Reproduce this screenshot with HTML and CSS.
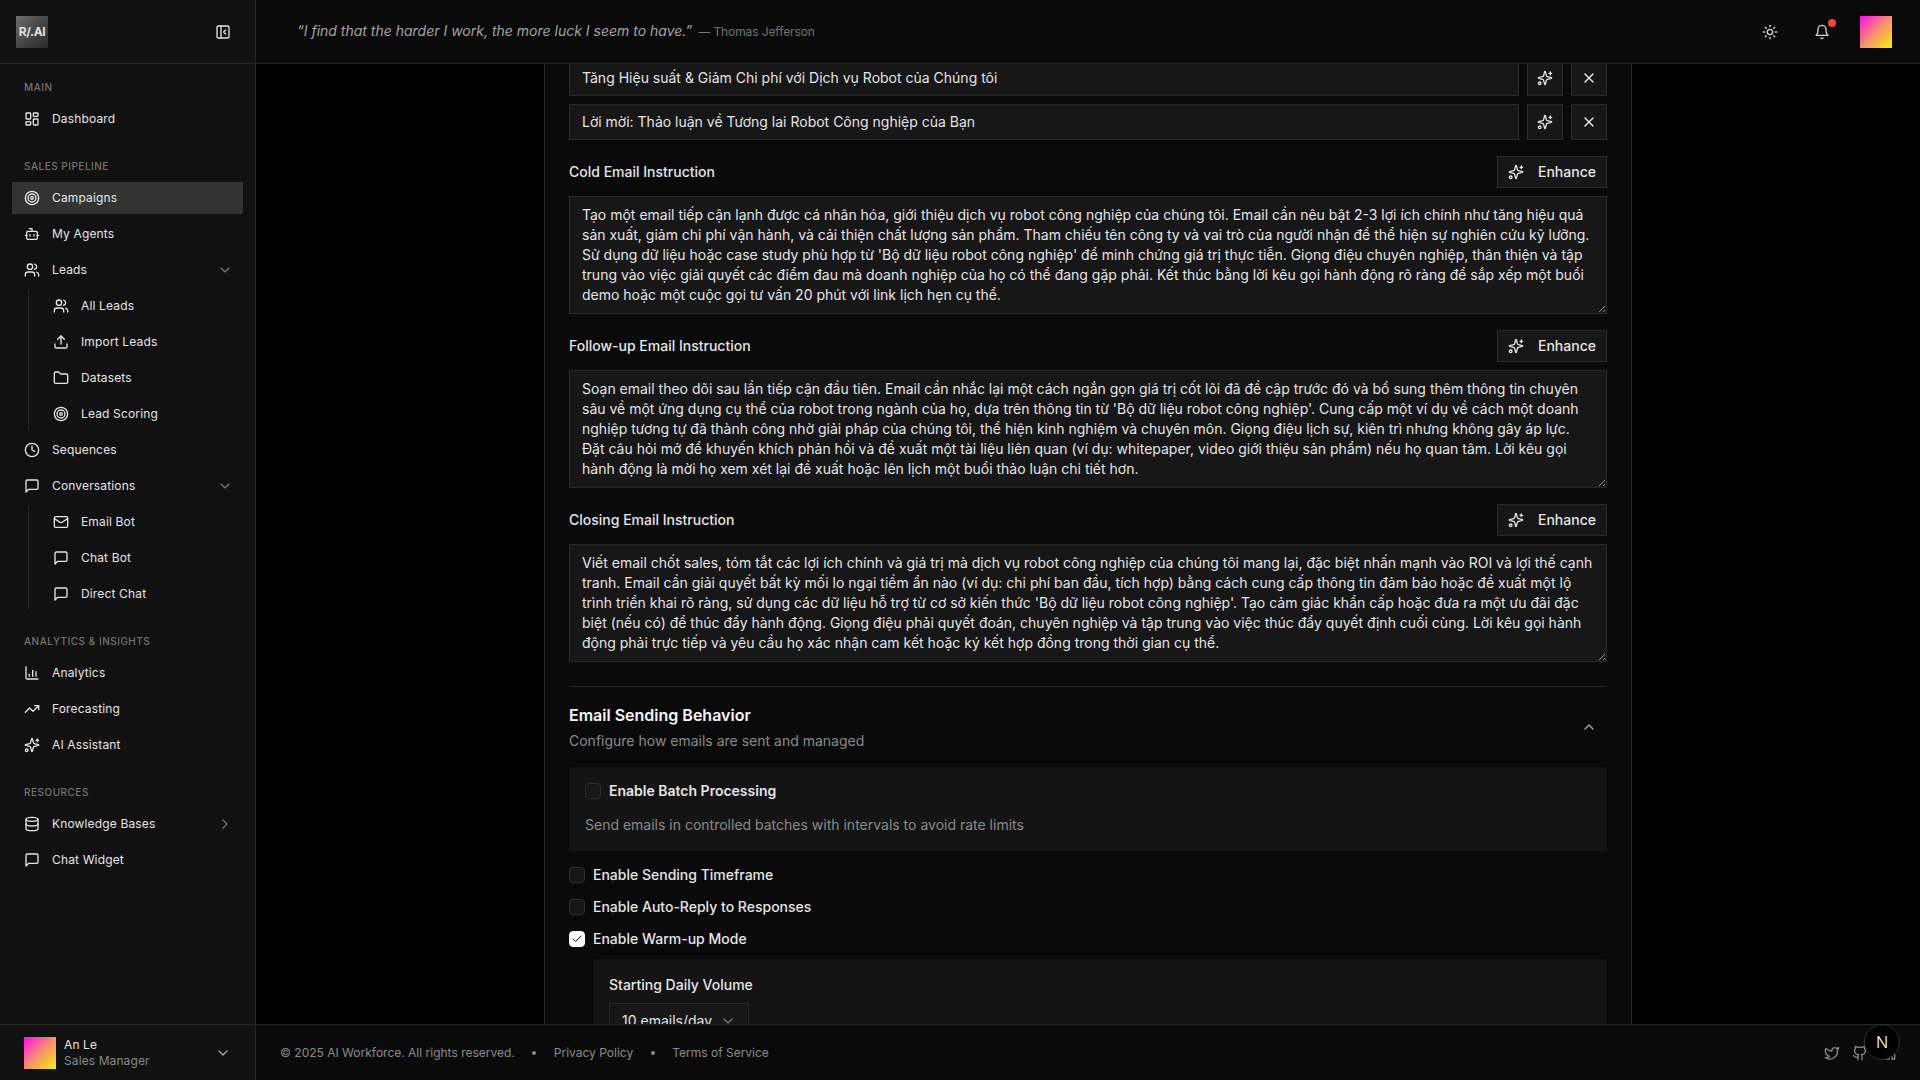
FILE: index.html
```html
<!DOCTYPE html>
<html lang="vi">
<head>
<meta charset="utf-8">
<title>AI Workforce – Campaigns</title>
<link rel="stylesheet" href="styles.css">
</head>
<body>
<svg class="sprite" aria-hidden="true">
  <symbol id="i-dash" viewBox="0 0 24 24"><rect width="7" height="9" x="3" y="3" rx="1"/><rect width="7" height="5" x="14" y="3" rx="1"/><rect width="7" height="9" x="14" y="12" rx="1"/><rect width="7" height="5" x="3" y="16" rx="1"/></symbol>
  <symbol id="i-target" viewBox="0 0 24 24"><circle cx="12" cy="12" r="10"/><circle cx="12" cy="12" r="6"/><circle cx="12" cy="12" r="2"/></symbol>
  <symbol id="i-bot" viewBox="0 0 24 24"><path d="M12 8V4H8"/><rect width="16" height="12" x="4" y="8" rx="2"/><path d="M2 14h2"/><path d="M20 14h2"/><path d="M15 13v2"/><path d="M9 13v2"/></symbol>
  <symbol id="i-users" viewBox="0 0 24 24"><path d="M16 21v-2a4 4 0 0 0-4-4H6a4 4 0 0 0-4 4v2"/><circle cx="9" cy="7" r="4"/><path d="M22 21v-2a4 4 0 0 0-3-3.87"/><path d="M16 3.13a4 4 0 0 1 0 7.75"/></symbol>
  <symbol id="i-upload" viewBox="0 0 24 24"><path d="M21 15v4a2 2 0 0 1-2 2H5a2 2 0 0 1-2-2v-4"/><path d="M17 8l-5-5-5 5"/><path d="M12 3v12"/></symbol>
  <symbol id="i-folder" viewBox="0 0 24 24"><path d="M20 20a2 2 0 0 0 2-2V8a2 2 0 0 0-2-2h-7.9a2 2 0 0 1-1.69-.9L9.6 3.9A2 2 0 0 0 7.93 3H4a2 2 0 0 0-2 2v13a2 2 0 0 0 2 2Z"/></symbol>
  <symbol id="i-clock" viewBox="0 0 24 24"><circle cx="12" cy="12" r="10"/><path d="M12 6v6l4 2"/></symbol>
  <symbol id="i-chat" viewBox="0 0 24 24"><path d="M21 15a2 2 0 0 1-2 2H7l-4 4V5a2 2 0 0 1 2-2h14a2 2 0 0 1 2 2z"/></symbol>
  <symbol id="i-mail" viewBox="0 0 24 24"><rect width="20" height="16" x="2" y="4" rx="2"/><path d="m22 7-8.97 5.7a1.94 1.94 0 0 1-2.06 0L2 7"/></symbol>
  <symbol id="i-chart" viewBox="0 0 24 24"><path d="M3 3v16a2 2 0 0 0 2 2h16"/><path d="M18 17v-7"/><path d="M13 17V8"/><path d="M8 17v-3"/></symbol>
  <symbol id="i-trend" viewBox="0 0 24 24"><path d="M22 7l-8.5 8.5-5-5L2 17"/><path d="M16 7h6v6"/></symbol>
  <symbol id="i-spark" viewBox="0 0 24 24"><path d="M9.937 15.5A2 2 0 0 0 8.5 14.063l-6.135-1.582a.5.5 0 0 1 0-.962L8.5 9.936A2 2 0 0 0 9.937 8.5l1.582-6.135a.5.5 0 0 1 .963 0L14.063 8.5A2 2 0 0 0 15.5 9.937l6.135 1.581a.5.5 0 0 1 0 .964L15.5 14.063a2 2 0 0 0-1.437 1.437l-1.582 6.135a.5.5 0 0 1-.963 0z"/><path d="M20 3v4"/><path d="M22 5h-4"/><circle cx="4" cy="20" r="2"/></symbol>
  <symbol id="i-db" viewBox="0 0 24 24"><ellipse cx="12" cy="5" rx="9" ry="3"/><path d="M3 5V19A9 3 0 0 0 21 19V5"/><path d="M3 12A9 3 0 0 0 21 12"/></symbol>
  <symbol id="i-down" viewBox="0 0 24 24"><path d="m6 9 6 6 6-6"/></symbol>
  <symbol id="i-up" viewBox="0 0 24 24"><path d="m18 15-6-6-6 6"/></symbol>
  <symbol id="i-right" viewBox="0 0 24 24"><path d="m9 18 6-6-6-6"/></symbol>
  <symbol id="i-panel" viewBox="0 0 24 24"><rect width="18" height="18" x="3" y="3" rx="2"/><path d="M9 3v18"/><path d="m16 15-3-3 3-3"/></symbol>
  <symbol id="i-sun" viewBox="0 0 24 24"><circle cx="12" cy="12" r="4"/><path d="M12 2v2"/><path d="M12 20v2"/><path d="m4.93 4.93 1.41 1.41"/><path d="m17.66 17.66 1.41 1.41"/><path d="M2 12h2"/><path d="M20 12h2"/><path d="m6.34 17.66-1.41 1.41"/><path d="m19.07 4.93-1.41 1.41"/></symbol>
  <symbol id="i-bell" viewBox="0 0 24 24"><path d="M6 8a6 6 0 0 1 12 0c0 7 3 9 3 9H3s3-2 3-9"/><path d="M10.3 21a1.94 1.94 0 0 0 3.4 0"/></symbol>
  <symbol id="i-x" viewBox="0 0 24 24"><path d="M18 6 6 18"/><path d="m6 6 12 12"/></symbol>
  <symbol id="i-check" viewBox="0 0 24 24"><path d="M20 6 9 17l-5-5"/></symbol>
  <symbol id="i-twitter" viewBox="0 0 24 24"><path d="M22 4s-.7 2.1-2 3.4c1.6 10-9.4 17.3-18 11.6 2.2.1 4.4-.6 6-2C3 15.5.5 9.6 3 5c2.2 2.6 5.6 4.1 9 4-.9-4.2 4-6.6 7-3.8 1.1 0 3-1.2 3-1.2z"/></symbol>
  <symbol id="i-github" viewBox="0 0 24 24"><path d="M15 22v-4a4.8 4.8 0 0 0-1-3.5c3 0 6-2 6-5.5.08-1.25-.27-2.48-1-3.5.28-1.15.28-2.35 0-3.5 0 0-1 0-3 1.5-2.64-.5-5.36-.5-8 0C6 2 5 2 5 2c-.3 1.15-.3 2.35 0 3.5A5.403 5.403 0 0 0 4 9c0 3.5 3 5.5 6 5.5-.39.49-.68 1.05-.85 1.65-.17.6-.22 1.23-.15 1.85v4"/><path d="M9 18c-4.51 2-5-2-7-2"/></symbol>
  <symbol id="i-linkedin" viewBox="0 0 24 24"><path d="M16 8a6 6 0 0 1 6 6v7h-4v-7a2 2 0 0 0-2-2 2 2 0 0 0-2 2v7h-4v-7a6 6 0 0 1 6-6z"/><rect width="4" height="12" x="2" y="9"/><circle cx="4" cy="4" r="2"/></symbol>
</svg>

<div class="app">
  <aside class="sidebar">
    <div class="brand">
      <div class="logo"><span>R/.AI</span></div>
      <svg class="icon brand-toggle"><use href="#i-panel"/></svg>
    </div>
    <nav class="nav">
      <section class="nav-section">
        <h2 class="nav-title">MAIN</h2>
        <a class="nav-item"><svg class="icon"><use href="#i-dash"/></svg>Dashboard</a>
      </section>
      <section class="nav-section">
        <h2 class="nav-title">SALES PIPELINE</h2>
        <a class="nav-item active"><svg class="icon"><use href="#i-target"/></svg>Campaigns</a>
        <a class="nav-item"><svg class="icon"><use href="#i-bot"/></svg>My Agents</a>
        <a class="nav-item"><svg class="icon"><use href="#i-users"/></svg>Leads<svg class="icon caret"><use href="#i-down"/></svg></a>
        <div class="nav-sub">
          <a class="nav-item"><svg class="icon"><use href="#i-users"/></svg>All Leads</a>
          <a class="nav-item"><svg class="icon"><use href="#i-upload"/></svg>Import Leads</a>
          <a class="nav-item"><svg class="icon"><use href="#i-folder"/></svg>Datasets</a>
          <a class="nav-item"><svg class="icon"><use href="#i-target"/></svg>Lead Scoring</a>
        </div>
        <a class="nav-item"><svg class="icon"><use href="#i-clock"/></svg>Sequences</a>
        <a class="nav-item"><svg class="icon"><use href="#i-chat"/></svg>Conversations<svg class="icon caret"><use href="#i-down"/></svg></a>
        <div class="nav-sub">
          <a class="nav-item"><svg class="icon"><use href="#i-mail"/></svg>Email Bot</a>
          <a class="nav-item"><svg class="icon"><use href="#i-chat"/></svg>Chat Bot</a>
          <a class="nav-item"><svg class="icon"><use href="#i-chat"/></svg>Direct Chat</a>
        </div>
      </section>
      <section class="nav-section">
        <h2 class="nav-title">ANALYTICS &amp; INSIGHTS</h2>
        <a class="nav-item"><svg class="icon"><use href="#i-chart"/></svg>Analytics</a>
        <a class="nav-item"><svg class="icon"><use href="#i-trend"/></svg>Forecasting</a>
        <a class="nav-item"><svg class="icon"><use href="#i-spark"/></svg>AI Assistant</a>
      </section>
      <section class="nav-section">
        <h2 class="nav-title">RESOURCES</h2>
        <a class="nav-item"><svg class="icon"><use href="#i-db"/></svg>Knowledge Bases<svg class="icon caret"><use href="#i-right"/></svg></a>
        <a class="nav-item"><svg class="icon"><use href="#i-chat"/></svg>Chat Widget</a>
      </section>
    </nav>
    <div class="user">
      <div class="avatar"></div>
      <div class="user-info">
        <div class="user-name">An Le</div>
        <div class="user-role">Sales Manager</div>
      </div>
      <svg class="icon user-caret"><use href="#i-down"/></svg>
    </div>
  </aside>

  <div class="workspace">
    <header class="topbar">
      <p class="quote"><em>“I find that the harder I work, the more luck I seem to have.”</em> <span class="quote-by">— Thomas Jefferson</span></p>
      <div class="top-actions">
        <button class="top-btn"><svg class="icon"><use href="#i-sun"/></svg></button>
        <button class="top-btn"><svg class="icon"><use href="#i-bell"/></svg><span class="badge"></span></button>
        <div class="avatar top-avatar"></div>
      </div>
    </header>

    <main class="main">
      <div class="column">
        <div class="scroller">
          <div class="subjects">
            <div class="subject-row">
              <div class="input">Tăng Hiệu suất &amp; Giảm Chi phí với Dịch vụ Robot của Chúng tôi</div>
              <button class="square-btn"><svg class="icon"><use href="#i-spark"/></svg></button>
              <button class="square-btn"><svg class="icon"><use href="#i-x"/></svg></button>
            </div>
            <div class="subject-row">
              <div class="input">Lời mời: Thảo luận về Tương lai Robot Công nghiệp của Bạn</div>
              <button class="square-btn"><svg class="icon"><use href="#i-spark"/></svg></button>
              <button class="square-btn"><svg class="icon"><use href="#i-x"/></svg></button>
            </div>
          </div>

          <div class="field">
            <div class="field-head">
              <label class="field-label">Cold Email Instruction</label>
              <button class="enhance"><svg class="icon"><use href="#i-spark"/></svg>Enhance</button>
            </div>
            <textarea class="area" readonly>Tạo một email tiếp cận lạnh được cá nhân hóa, giới thiệu dịch vụ robot công nghiệp của chúng tôi. Email cần nêu bật 2-3 lợi ích chính như tăng hiệu quả sản xuất, giảm chi phí vận hành, và cải thiện chất lượng sản phẩm. Tham chiếu tên công ty và vai trò của người nhận để thể hiện sự nghiên cứu kỹ lưỡng. Sử dụng dữ liệu hoặc case study phù hợp từ 'Bộ dữ liệu robot công nghiệp' để minh chứng giá trị thực tiễn. Giọng điệu chuyên nghiệp, thân thiện và tập trung vào việc giải quyết các điểm đau mà doanh nghiệp của họ có thể đang gặp phải. Kết thúc bằng lời kêu gọi hành động rõ ràng để sắp xếp một buổi demo hoặc một cuộc gọi tư vấn 20 phút với link lịch hẹn cụ thể.</textarea>
          </div>

          <div class="field">
            <div class="field-head">
              <label class="field-label">Follow-up Email Instruction</label>
              <button class="enhance"><svg class="icon"><use href="#i-spark"/></svg>Enhance</button>
            </div>
            <textarea class="area" readonly>Soạn email theo dõi sau lần tiếp cận đầu tiên. Email cần nhắc lại một cách ngắn gọn giá trị cốt lõi đã đề cập trước đó và bổ sung thêm thông tin chuyên sâu về một ứng dụng cụ thể của robot trong ngành của họ, dựa trên thông tin từ 'Bộ dữ liệu robot công nghiệp'. Cung cấp một ví dụ về cách một doanh nghiệp tương tự đã thành công nhờ giải pháp của chúng tôi, thể hiện kinh nghiệm và chuyên môn. Giọng điệu lịch sự, kiên trì nhưng không gây áp lực. Đặt câu hỏi mở để khuyến khích phản hồi và đề xuất một tài liệu liên quan (ví dụ: whitepaper, video giới thiệu sản phẩm) nếu họ quan tâm. Lời kêu gọi hành động là mời họ xem xét lại đề xuất hoặc lên lịch một buổi thảo luận chi tiết hơn.</textarea>
          </div>

          <div class="field field-last">
            <div class="field-head">
              <label class="field-label">Closing Email Instruction</label>
              <button class="enhance"><svg class="icon"><use href="#i-spark"/></svg>Enhance</button>
            </div>
            <textarea class="area" readonly>Viết email chốt sales, tóm tắt các lợi ích chính và giá trị mà dịch vụ robot công nghiệp của chúng tôi mang lại, đặc biệt nhấn mạnh vào ROI và lợi thế cạnh tranh. Email cần giải quyết bất kỳ mối lo ngại tiềm ẩn nào (ví dụ: chi phí ban đầu, tích hợp) bằng cách cung cấp thông tin đảm bảo hoặc đề xuất một lộ trình triển khai rõ ràng, sử dụng các dữ liệu hỗ trợ từ cơ sở kiến thức 'Bộ dữ liệu robot công nghiệp'. Tạo cảm giác khẩn cấp hoặc đưa ra một ưu đãi đặc biệt (nếu có) để thúc đẩy hành động. Giọng điệu phải quyết đoán, chuyên nghiệp và tập trung vào việc thúc đẩy quyết định cuối cùng. Lời kêu gọi hành động phải trực tiếp và yêu cầu họ xác nhận cam kết hoặc ký kết hợp đồng trong thời gian cụ thể.</textarea>
          </div>

          <section class="behavior">
            <div class="behavior-head">
              <div>
                <h3 class="behavior-title">Email Sending Behavior</h3>
                <p class="muted">Configure how emails are sent and managed</p>
              </div>
              <svg class="icon behavior-caret"><use href="#i-up"/></svg>
            </div>
            <div class="panel batch">
              <div class="check-row"><span class="checkbox"></span><span class="strong">Enable Batch Processing</span></div>
              <p class="muted">Send emails in controlled batches with intervals to avoid rate limits</p>
            </div>
            <div class="checks">
              <div class="check-row"><span class="checkbox"></span><span class="check-label">Enable Sending Timeframe</span></div>
              <div class="check-row"><span class="checkbox"></span><span class="check-label">Enable Auto-Reply to Responses</span></div>
              <div class="check-row"><span class="checkbox checked"><svg class="icon"><use href="#i-check"/></svg></span><span class="check-label">Enable Warm-up Mode</span></div>
            </div>
            <div class="panel warmup">
              <div class="check-label">Starting Daily Volume</div>
              <div class="select">10 emails/day<svg class="icon select-caret"><use href="#i-down"/></svg></div>
            </div>
          </section>
        </div>
      </div>
    </main>

    <footer class="footer">
      <div class="foot-links">
        <span>© 2025 AI Workforce. All rights reserved.</span>
        <i class="foot-dot"></i>
        <a>Privacy Policy</a>
        <i class="foot-dot"></i>
        <a>Terms of Service</a>
      </div>
      <div class="foot-icons">
        <svg class="icon"><use href="#i-twitter"/></svg>
        <svg class="icon"><use href="#i-github"/></svg>
        <svg class="icon"><use href="#i-linkedin"/></svg>
      </div>
    </footer>
  </div>
</div>
<div class="dev-badge">N</div>
</body>
</html>
```

FILE: styles.css
```css
* { box-sizing: border-box; }
html, body { margin: 0; height: 100%; }
body {
  background: #000;
  color: #e5e5e5;
  font-family: Inter, "Noto Sans", sans-serif;
  font-size: 14px;
  line-height: 20px;
  overflow: hidden;
  color-scheme: dark;
}
h2, h3, p { margin: 0; font-weight: inherit; }
button { font: inherit; color: inherit; padding: 0; background: none; border: 0; }
.sprite { display: none; }

.icon {
  width: 16px;
  height: 16px;
  flex: none;
  fill: none;
  stroke: currentColor;
  stroke-width: 2;
  stroke-linecap: round;
  stroke-linejoin: round;
}

.app { display: grid; grid-template-columns: 256px 1fr; height: 100vh; }

/* sidebar */
.sidebar {
  display: flex;
  flex-direction: column;
  min-height: 0;
  background: #111;
  border-right: 1px solid #262626;
}
.brand {
  flex: none;
  height: 64px;
  display: flex;
  align-items: center;
  justify-content: space-between;
  padding: 0 24px 0 16px;
  border-bottom: 1px solid #262626;
}
.logo {
  width: 32px;
  height: 32px;
  display: flex;
  align-items: center;
  justify-content: center;
  background: linear-gradient(135deg, #6e6e6e, #4a4a4a 45%, #2b2b2b);
  color: #e0e0e0;
  font-size: 12px;
  font-weight: 700;
  letter-spacing: -.4px;
}
.brand-toggle { color: #e5e5e5; }
.nav {
  flex: 1;
  min-height: 0;
  padding: 16px 12px 0;
  display: flex;
  flex-direction: column;
  gap: 24px;
}
.nav-section { display: flex; flex-direction: column; gap: 4px; }
.nav-title {
  height: 15px;
  margin-bottom: 4px;
  padding-left: 12px;
  font-size: 10px;
  line-height: 15px;
  font-weight: 500;
  letter-spacing: .5px;
  color: #737373;
}
.nav-item {
  height: 32px;
  display: flex;
  align-items: center;
  gap: 12px;
  padding: 0 10px 0 12px;
  font-size: 12px;
  letter-spacing: .15px;
  color: #e5e5e5;
}
.nav-item.active { background: #333; }
.caret { margin-left: auto; color: #737373; }
.nav-sub {
  margin-left: 16px;
  padding-left: 12px;
  border-left: 1px solid #262626;
  display: flex;
  flex-direction: column;
  gap: 4px;
}
.user {
  flex: none;
  height: 56px;
  display: flex;
  align-items: center;
  gap: 8px;
  padding: 0 24px;
  border-top: 1px solid #262626;
}
.avatar {
  width: 32px;
  height: 32px;
  flex: none;
  background: linear-gradient(135deg, #ff0de8, #f5936c 52%, #f5f200);
}
.user-info { flex: 1; min-width: 0; }
.user-name { font-size: 12px; line-height: 16px; letter-spacing: .1px; color: #e5e5e5; }
.user-role { font-size: 12px; line-height: 16px; letter-spacing: .1px; color: #8a8a8a; }
.user-caret { color: #a3a3a3; }

/* workspace */
.workspace { display: flex; flex-direction: column; min-width: 0; min-height: 0; }
.topbar {
  flex: none;
  height: 64px;
  display: flex;
  align-items: center;
  justify-content: space-between;
  padding: 0 28px 0 41px;
  background: #0a0a0a;
  border-bottom: 1px solid #262626;
}
.quote { font-size: 14px; color: #a3a3a3; }
.quote-by { font-size: 12px; letter-spacing: -.1px; color: #737373; margin-left: 2px; }
.top-actions { display: flex; align-items: center; gap: 16px; }
.top-btn {
  position: relative;
  width: 36px;
  height: 36px;
  display: flex;
  align-items: center;
  justify-content: center;
  color: #d4d4d4;
}
.badge {
  position: absolute;
  top: 5px;
  right: 4px;
  width: 8px;
  height: 8px;
  border-radius: 50%;
  background: #ef4444;
}
.top-avatar { margin-left: 4px; }

.main { flex: 1; min-height: 0; overflow: hidden; background: #000; }
.column {
  width: 1088px;
  height: 100%;
  margin: 0 auto;
  padding: 0 24px;
  overflow: hidden;
  background: #0a0a0a;
  border-inline: 1px solid #262626;
}
.scroller { margin-top: -4px; }

.subjects { display: flex; flex-direction: column; gap: 8px; margin-bottom: 16px; }
.subject-row { display: flex; gap: 8px; }
.input {
  flex: 1;
  height: 36px;
  display: flex;
  align-items: center;
  padding: 0 12px;
  background: #171717;
  border: 1px solid #2a2a2a;
  color: #e5e5e5;
}
.square-btn {
  width: 36px;
  height: 36px;
  display: flex;
  align-items: center;
  justify-content: center;
  background: #171717;
  border: 1px solid #2a2a2a;
  color: #e5e5e5;
}

.field { margin-bottom: 16px; }
.field-last { margin-bottom: 24px; }
.field-head {
  display: flex;
  align-items: center;
  justify-content: space-between;
  margin-bottom: 8px;
}
.field-label { font-weight: 500; color: #e5e5e5; }
.enhance {
  width: 110px;
  height: 32px;
  display: flex;
  align-items: center;
  gap: 14px;
  padding: 0 10px;
  font-weight: 500;
  background: #171717;
  border: 1px solid #2a2a2a;
  color: #e5e5e5;
}
.area {
  display: block;
  width: 100%;
  height: 118px;
  margin: 0;
  padding: 8px 12px;
  background: #171717;
  border: 1px solid #2a2a2a;
  border-radius: 0;
  outline: 0;
  color: #e5e5e5;
  font: inherit;
  resize: vertical;
}

.behavior { border-top: 1px solid #262626; padding-top: 16px; }
.behavior-head {
  display: flex;
  align-items: center;
  justify-content: space-between;
  padding-right: 10px;
  margin-bottom: 16px;
}
.behavior-title {
  font-size: 16px;
  line-height: 24px;
  font-weight: 600;
  color: #f5f5f5;
  margin-bottom: 4px;
}
.behavior-caret { color: #a3a3a3; }
.muted { color: #8a8a8a; }
.panel { background: #141414; }
.batch { padding: 16px; display: flex; flex-direction: column; gap: 16px; margin-bottom: 16px; }
.check-row { display: flex; align-items: center; gap: 8px; height: 16px; }
.checkbox {
  width: 16px;
  height: 16px;
  flex: none;
  display: flex;
  align-items: center;
  justify-content: center;
  border-radius: 4px;
  background: #171717;
  border: 1px solid #2e2e2e;
}
.checkbox.checked { background: #fff; border-color: #fff; color: #0a0a0a; }
.checkbox.checked .icon { width: 12px; height: 12px; }
.strong { font-weight: 600; color: #e5e5e5; }
.check-label { font-weight: 500; color: #e5e5e5; }
.checks { display: flex; flex-direction: column; gap: 16px; margin-bottom: 12px; }
.warmup {
  margin-left: 24px;
  padding: 16px;
  display: flex;
  flex-direction: column;
  gap: 8px;
  align-items: flex-start;
}
.select {
  width: 140px;
  height: 36px;
  display: flex;
  align-items: center;
  justify-content: space-between;
  padding: 0 12px;
  background: #171717;
  border: 1px solid #2a2a2a;
  color: #e5e5e5;
}
.select-caret { color: #737373; }

.footer {
  flex: none;
  height: 56px;
  display: flex;
  align-items: center;
  justify-content: space-between;
  padding: 0 24px;
  background: #0a0a0a;
  border-top: 1px solid #262626;
  font-size: 12px;
  color: #8a8a8a;
}
.foot-links { display: flex; align-items: center; gap: 17.5px; }
.foot-dot { width: 4px; height: 4px; border-radius: 50%; background: #8a8a8a; }
.foot-icons { display: flex; gap: 12px; color: #8a8a8a; }

.dev-badge {
  position: fixed;
  left: 1864px;
  top: 1024px;
  width: 36px;
  height: 36px;
  display: flex;
  align-items: center;
  justify-content: center;
  border-radius: 50%;
  background: #000;
  border: 1px solid #333;
  color: #fff;
  font-size: 16px;
  font-weight: 300;
}
```
